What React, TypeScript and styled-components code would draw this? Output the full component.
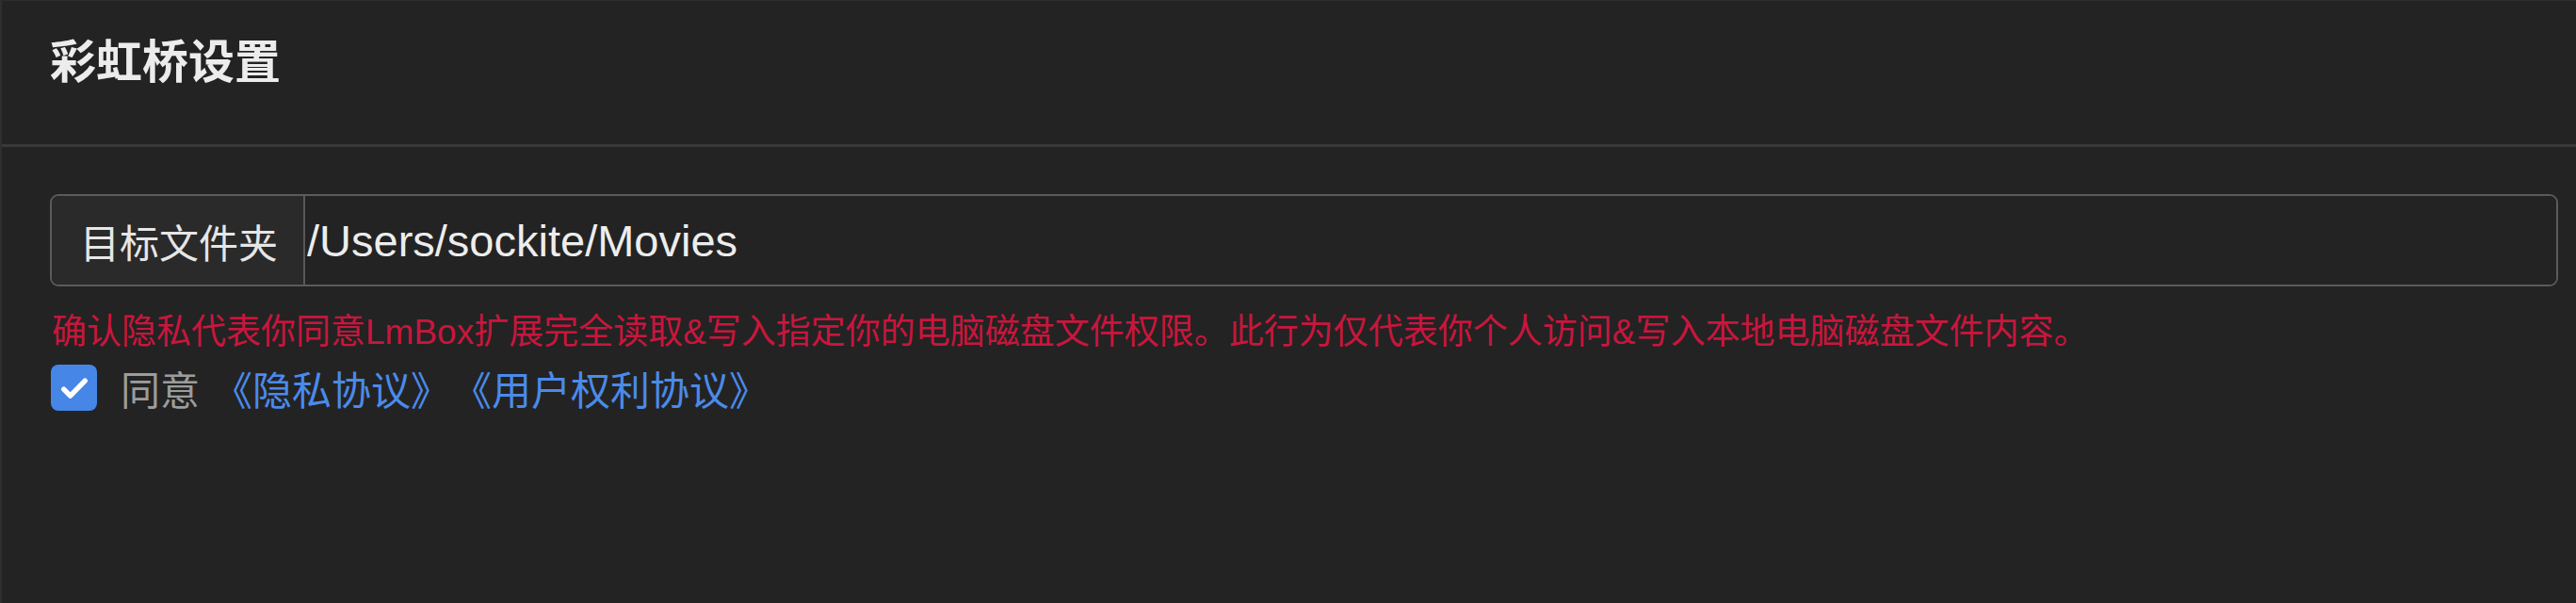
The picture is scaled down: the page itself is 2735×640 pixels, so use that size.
import styled, { createGlobalStyle } from 'styled-components'

const GlobalStyle = createGlobalStyle`
  html, body {
    margin: 0;
    padding: 0;
    background: #232323;
  }
  body {
    font-family: "Liberation Sans", "Noto Sans CJK SC", sans-serif;
  }
`

const App = () => {
  return (
    <>
      <GlobalStyle />
      <Panel>
        <Header>
          <Title>彩虹桥设置</Title>
        </Header>
        <Body>
          <InputGroup>
            <Addon>目标文件夹</Addon>
            <PathInput readOnly value="/Users/sockite/Movies" />
          </InputGroup>
          <Warning>
            确认隐私代表你同意LmBox扩展完全读取&amp;写入指定你的电脑磁盘文件权限。此行为仅代表你个人访问&amp;写入本地电脑磁盘文件内容。
          </Warning>
          <AgreeRow>
            <CheckBox>
              <svg width="36" height="36" viewBox="0 0 24 24" fill="none">
                <path d="M4.5 12.8l4.6 4.6L19.5 6.8" stroke="#fff" strokeWidth="3.6" strokeLinecap="round" strokeLinejoin="round" />
              </svg>
            </CheckBox>
            <AgreeText>
              同意<Link href="#">《隐私协议》</Link><Link href="#">《用户权利协议》</Link>
            </AgreeText>
          </AgreeRow>
        </Body>
      </Panel>
    </>
  )
}

const Panel = styled.div`
  height: 640px;
  box-sizing: border-box;
  background: #232323;
  border-left: 2px solid #2f2f2f;
  border-top: 1px solid #2c2c2c;
`

const Header = styled.header`
  box-sizing: border-box;
  height: 155px;
  padding: 41px 0 0 51px;
  border-bottom: 3px solid #393939;
`

const Title = styled.h1`
  margin: 0;
  font-size: 49px;
  line-height: 49px;
  font-weight: 700;
  color: #ececec;
`

const Body = styled.div`
  padding: 50px 19px 0 51px;
`

const InputGroup = styled.div`
  display: flex;
  height: 98px;
  box-sizing: border-box;
  border: 2px solid #5b5b5b;
  border-radius: 9px;
  overflow: hidden;
`

const Addon = styled.div`
  display: flex;
  align-items: center;
  padding: 0 27px 0 30px;
  background: #2a2a2a;
  border-right: 2px solid #585858;
  font-size: 42px;
  color: #e6e6e6;
  white-space: nowrap;
`

const PathInput = styled.input`
  flex: 1;
  min-width: 0;
  border: none;
  outline: none;
  background: #232323;
  padding: 0 0 0 2px;
  font-family: "Liberation Sans", "Noto Sans CJK SC", sans-serif;
  font-size: 47px;
  color: #ededed;
`

const Warning = styled.p`
  margin: 23px 0 0 2px;
  font-size: 37px;
  line-height: 52px;
  color: #c8163d;
  white-space: nowrap;
`

const AgreeRow = styled.div`
  display: flex;
  align-items: center;
  gap: 25px;
  margin-top: 8px;
  padding-left: 1px;
`

const CheckBox = styled.span`
  display: flex;
  align-items: center;
  justify-content: center;
  width: 49px;
  height: 49px;
  border-radius: 8px;
  background: #4586e6;
`

const AgreeText = styled.span`
  display: flex;
  align-items: center;
  font-family: "Noto Sans CJK SC", sans-serif;
  font-size: 42px;
  line-height: 49px;
  color: #9c9c9c;
  white-space: nowrap;
`

const Link = styled.a`
  margin-left: 14px;
  color: #4a8bea;
  text-decoration: none;

  & + & {
    margin-left: 2px;
  }
`

export default App
